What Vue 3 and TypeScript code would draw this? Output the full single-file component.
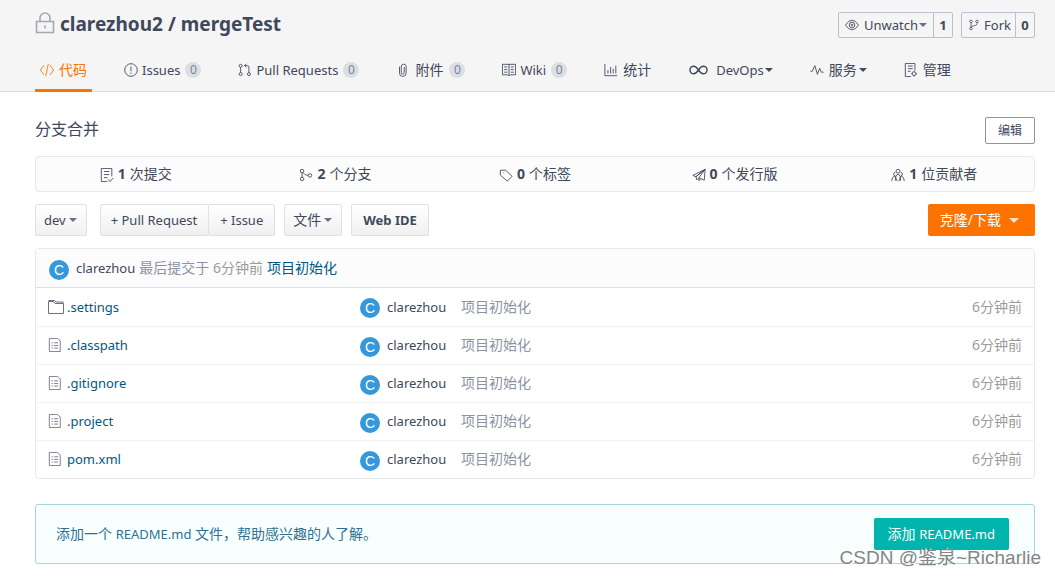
<script setup lang="ts">
interface Tab {
  label: string
  icon: string
  count?: number
  menu?: boolean
  active?: boolean
  cjk?: boolean
}

interface Stat {
  icon: string
  value: number
  label: string
}

interface Entry {
  name: string
  icon: string
}

const icons: Record<string, string> = {
  code: 'M4.5 2.5L.5 8l4 5.500M11.5 2.500L15.500 8l-4 5.500M9.5 1L6.5 15',
  issue: 'M8 .8a7.200 7.200 0 1 0 0 14.400a7.200 7.200 0 1 0 0-14.400M8 4v5.5M8 11v1.5',
  pull: 'M3 5v6M3 1.500a1.700 1.700 0 1 0 0 3.400a1.700 1.700 0 1 0 0-3.400M3 11a1.700 1.700 0 1 0 0 3.400a1.700 1.700 0 1 0 0-3.400M12.500 11a1.700 1.700 0 1 0 0 3.400a1.700 1.700 0 1 0 0-3.400M12.500 11V5q0-2-2-2H7.500M9.500 1L7.500 3l2 2',
  clip: 'M4 4v7.500a3.800 3.800 0 0 0 7.600 0V3.500a2.900 2.900 0 0 0-5.600 0V11a1.600 1.600 0 0 0 3.400 0V4.500',
  book: 'M.5 1.500h15v12H9.500L8 14.500l-1.500-1H.5zM8 1.500v12M2.500 4.500h3.500M2.500 7.500h3.500M2.500 10.500h3.500M10 4.500h3.500M10 7.500h3.500M10 10.500h3.500',
  chart: 'M1 1v13.500h14M4.500 12V8M7.500 12V4.500M10.500 12V6.500M13.500 12V3',
  pulse: 'M.5 9.500h2L5.500 3l3 10 2.500-7 2 4.500h2.500',
  manage: 'M8 15.500H1.500v-15h11v8M4.500 3.500h5.500M4.500 6.500h5.500M4.500 9.500h3M11.500 10a2.200 2.200 0 1 0 0 4.400a2.200 2.200 0 1 0 0-4.400M11.500 9v1M11.500 14.500v1M8.300 12.200h1M13.700 12.200h1',
  eye: 'M.5 8Q4 2.500 8 2.500t7.500 5.500Q12 13.500 8 13.500T.5 8zM8 4.800a3.200 3.200 0 1 0 0 6.400a3.200 3.200 0 1 0 0-6.400M8 7a1 1 0 1 0 0 2a1 1 0 1 0 0-2',
  fork: 'M4 5v6M4 1.500a1.700 1.700 0 1 0 0 3.400a1.700 1.700 0 1 0 0-3.400M4 11a1.700 1.700 0 1 0 0 3.400a1.700 1.700 0 1 0 0-3.400M12 1.500a1.700 1.700 0 1 0 0 3.400a1.700 1.700 0 1 0 0-3.400M12 5v1q0 3-4 3Q4 9 4 11',
  commit: 'M8.500 15.500H1.500v-15h12v9M4.500 4h6M4.500 7.500h6M4.500 11h4M9.500 13l2 2.500 3.500-4',
  branch: 'M3.500 5.500v5M3.500 1.500a2 2 0 1 0 0 4a2 2 0 1 0 0-4M3.500 10.500a2 2 0 1 0 0 4a2 2 0 1 0 0-4M12.500 6.500a2 2 0 1 0 0 4a2 2 0 1 0 0-4M4.500 5q2 3.500 6 3.500',
  tag: 'M1.500 2.500h6l7.500 7-5.500 5.500L1.500 8zM5 5.500h1',
  plane: 'M15 1.500L1 8.500l3.500 1.500zM15 1.500L4.500 10M15 1.500l-1 12.500-5.500-2.500M15 1.500L8 11v3.500l2-2.300M4.500 10l1 3.500 2.500-2.500',
  people: 'M8 1.500a2.200 2.200 0 1 0 0 4.400a2.200 2.200 0 1 0 0-4.400M5 5a2 2 0 1 0 0 4M11 5a2 2 0 1 1 0 4M5 14.500q0-6.500 3-7.500q3 1 3 7.500M.8 15q0-5 3.700-6l2.500 6M15.200 15q0-5-3.700-6L9 15',
  folder: 'M.5 14.500v-12h5l1.500 2h8.500v10zM.5 1.500h6l1.500 1.500h7v1.500',
  file: 'M1.500 .5h9.500l3 3v12H1.500zM4 5.500h1.500M7 5.500h4.500M4 8.500h1.500M7 8.500h4.500M4 11.500h1.500M7 11.500h4.500',
}

const tabs: Tab[] = [
  { label: '代码', icon: 'code', active: true, cjk: true },
  { label: 'Issues', icon: 'issue', count: 0 },
  { label: 'Pull Requests', icon: 'pull', count: 0 },
  { label: '附件', icon: 'clip', count: 0, cjk: true },
  { label: 'Wiki', icon: 'book', count: 0 },
  { label: '统计', icon: 'chart', cjk: true },
  { label: 'DevOps', icon: 'infinity', menu: true },
  { label: '服务', icon: 'pulse', menu: true, cjk: true },
  { label: '管理', icon: 'manage', cjk: true },
]

const stats: Stat[] = [
  { icon: 'commit', value: 1, label: '次提交' },
  { icon: 'branch', value: 2, label: '个分支' },
  { icon: 'tag', value: 0, label: '个标签' },
  { icon: 'plane', value: 0, label: '个发行版' },
  { icon: 'people', value: 1, label: '位贡献者' },
]

const entries: Entry[] = [
  { name: '.settings', icon: 'folder' },
  { name: '.classpath', icon: 'file' },
  { name: '.gitignore', icon: 'file' },
  { name: '.project', icon: 'file' },
  { name: 'pom.xml', icon: 'file' },
]
</script>

<template>
  <div class="page">
    <header class="top">
      <div class="title-row">
        <h1 class="title">
          <svg class="lock" viewBox="0 0 20 22" aria-hidden="true">
            <path d="M5 9.500V6a5 5 0 0 1 10 0v3.500M1.500 9.500h17v11h-17zM10 13.500v3" />
          </svg>
          <a href="#">clarezhou2</a><span>/</span><a href="#">mergeTest</a>
        </h1>
        <div class="social">
          <div class="pair">
            <button type="button" class="watch">
              <svg class="icon" viewBox="0 0 16 16" aria-hidden="true"><path :d="icons.eye" /></svg>
              Unwatch<i class="caret"></i>
            </button>
            <a href="#" class="num">1</a>
          </div>
          <div class="pair">
            <button type="button">
              <svg class="icon small" viewBox="0 0 16 16" aria-hidden="true"><path :d="icons.fork" /></svg>
              Fork
            </button>
            <a href="#" class="num">0</a>
          </div>
        </div>
      </div>
      <nav class="tabs">
        <a v-for="tab in tabs" :key="tab.label" href="#" class="tab" :class="{ active: tab.active, cjk: tab.cjk }">
          <svg v-if="tab.icon === 'infinity'" class="infinity" viewBox="0 0 20 10" aria-hidden="true">
            <path d="M10 5C8 2 6.500 1 5 1a4 4 0 0 0 0 8c1.500 0 3-1 5-4s3.500-4 5-4a4 4 0 0 1 0 8c-1.500 0-3-1-5-4z" />
          </svg>
          <svg v-else class="icon" viewBox="0 0 16 16" aria-hidden="true"><path :d="icons[tab.icon]" /></svg>
          <span>{{ tab.label }}</span>
          <span v-if="tab.count !== undefined" class="count">{{ tab.count }}</span>
          <i v-if="tab.menu" class="caret"></i>
        </a>
      </nav>
    </header>

    <main class="content">
      <div class="about">
        <p>分支合并</p>
        <button type="button" class="edit">编辑</button>
      </div>

      <div class="stats">
        <a v-for="stat in stats" :key="stat.label" href="#" class="stat">
          <svg class="icon" viewBox="0 0 16 16" aria-hidden="true"><path :d="icons[stat.icon]" /></svg>
          <b>{{ stat.value }}</b>
          <span>{{ stat.label }}</span>
        </a>
      </div>

      <div class="toolbar">
        <button type="button" class="btn branch">dev<i class="caret"></i></button>
        <div class="group">
          <button type="button" class="btn">+ Pull Request</button>
          <button type="button" class="btn">+ Issue</button>
        </div>
        <button type="button" class="btn cjk">文件<i class="caret"></i></button>
        <button type="button" class="btn strong">Web IDE</button>
        <button type="button" class="clone">克隆/下载<i class="caret"></i></button>
      </div>

      <section class="tree">
        <div class="latest">
          <span class="avatar">C</span>
          <a href="#" class="author">clarezhou</a>
          <span class="muted">最后提交于 <span class="time">6分钟前</span></span>
          <a href="#" class="message">项目初始化</a>
        </div>
        <table>
          <tbody>
            <tr v-for="entry in entries" :key="entry.name">
              <td class="name">
                <a href="#">
                  <svg class="icon" :class="entry.icon" viewBox="0 0 16 16" aria-hidden="true"><path :d="icons[entry.icon]" /></svg>
                  <span>{{ entry.name }}</span>
                </a>
              </td>
              <td class="by"><div><span class="avatar">C</span><a href="#">clarezhou</a></div></td>
              <td class="msg">项目初始化</td>
              <td class="age">6分钟前</td>
            </tr>
          </tbody>
        </table>
      </section>

      <section class="readme">
        <p>添加一个 <span>README.md</span> 文件，帮助感兴趣的人了解。</p>
        <button type="button">添加 <span>README.md</span></button>
      </section>
    </main>
    <div class="watermark">CSDN @鉴泉~Richarlie</div>
  </div>
</template>

<style>
body {
  margin: 0;
  background: #fff;
}
</style>

<style scoped>
.page {
  position: relative;
  color: #40485b;
  font: 13px/20px "Noto Sans", "Noto Sans CJK SC", sans-serif;
}

.page * {
  box-sizing: border-box;
}

a {
  color: inherit;
  text-decoration: none;
}

button {
  margin: 0;
  color: inherit;
  font: inherit;
  cursor: pointer;
}

p {
  margin: 0;
}

svg {
  flex: none;
  fill: none;
  stroke: currentColor;
}

.icon {
  width: 14px;
  height: 14px;
}

.icon.small {
  width: 12px;
  height: 12px;
}

.caret {
  display: inline-block;
  flex: none;
  border: 4px solid transparent;
  border-top-color: currentColor;
  border-bottom: 0;
}

.top {
  padding: 0 20px 0 35px;
  border-bottom: 1px solid #dcdcdc;
  background: #f5f5f5;
}

.title-row {
  display: flex;
  align-items: center;
  justify-content: space-between;
  height: 49px;
}

.title {
  display: flex;
  align-items: center;
  gap: 5px;
  margin: 0 0 2px;
  font-size: 19px;
  line-height: 28px;
}

.lock {
  width: 20px;
  height: 22px;
  margin-bottom: 2px;
  color: #a3a8b3;
  stroke-width: 1.6;
}

.social {
  display: flex;
  gap: 8px;
}

.pair {
  display: flex;
  height: 26px;
  border: 1px solid #bcc0cb;
  border-radius: 2px;
}

.pair button {
  display: flex;
  align-items: center;
  gap: 4px;
  padding: 0 4px 0 6px;
  border: 0;
  background: none;
}

.pair .watch {
  padding-right: 6px;
  gap: 5px;
}

.pair .caret {
  margin-left: -4px;
  color: #6b7182;
}

.num {
  min-width: 19px;
  border-left: 1px solid #bcc0cb;
  font-weight: bold;
  line-height: 24px;
  text-align: center;
}

.tabs {
  display: flex;
  gap: 27px;
}

.tab {
  display: flex;
  align-items: center;
  gap: 4px;
  height: 43px;
  margin-bottom: -1px;
  padding: 2px 5px 0;
  border-bottom: 3px solid transparent;
  white-space: nowrap;
}

.tab.cjk {
  gap: 5px;
}

.tab.active {
  border-color: #fe7300;
  color: #fe7300;
}

.tab .caret {
  margin-left: -3px;
}

.cjk {
  font-size: 14px;
}

.infinity {
  width: 19px;
  height: 10px;
  margin: 0 4px 0 1px;
  stroke-width: 1.5;
}

.count {
  width: 16px;
  height: 16px;
  margin-left: 1px;
  border-radius: 8px;
  background: #dcdee2;
  color: #7483a8;
  font-size: 12px;
  line-height: 16px;
  text-align: center;
}

.content {
  padding: 25px 20px 12px 35px;
}

.about {
  display: flex;
  align-items: flex-start;
  justify-content: space-between;
  margin-bottom: 12px;
  font-size: 16px;
  line-height: 24px;
}

.edit {
  height: 27px;
  padding: 0 12px;
  border: 1px solid #9095a1;
  border-radius: 2px;
  background: #fff;
  font-size: 12px;
}

.stats {
  display: grid;
  grid-template-columns: repeat(5, 1fr);
  height: 36px;
  border: 1px solid #e3e9ed;
  border-radius: 4px;
  background: #fcfcfc;
}

.stat {
  display: flex;
  align-items: center;
  justify-content: center;
  gap: 4px;
  font-size: 14px;
}

.stat .icon {
  margin-top: 2px;
}

.toolbar {
  display: flex;
  margin: 12px 0;
  gap: 9px;
}

.btn {
  display: flex;
  align-items: center;
  gap: 3px;
  height: 32px;
  padding: 0 9px 0 8px;
  border: 1px solid #dce3e8;
  border-radius: 2px;
  background: linear-gradient(#fff, #f0f0f0);
}

.btn .caret {
  color: #6b7182;
}

.branch {
  margin-right: 4px;
}

.group {
  display: flex;
}

.group .btn {
  padding: 0 11px 0 10px;
}

.group .btn + .btn {
  padding: 0 11px;
  margin-left: -1px;
}

.btn.strong {
  padding: 0 11px;
  font-weight: bold;
}

.clone {
  display: flex;
  align-items: center;
  gap: 8px;
  height: 32px;
  margin-left: auto;
  padding: 0 16px 0 12px;
  border: 0;
  border-radius: 2px;
  background: #fe7300;
  color: #fff;
  font-size: 14px;
}

.clone .caret {
  border-width: 5px 5px 0;
  opacity: 0.8;
}

.tree {
  border: 1px solid #e3e9ed;
  border-radius: 4px;
}

.latest {
  display: flex;
  align-items: center;
  gap: 4px;
  height: 39px;
  padding: 0 13px;
  border-bottom: 1px solid #dce3e8;
  background: #fcfcfc;
  font-size: 14px;
}

.avatar {
  flex: none;
  width: 20px;
  height: 20px;
  margin: 3px 3px 0 0;
  border-radius: 50%;
  background: #3498db;
  color: #fff;
  font: 14px/21px "Liberation Sans", sans-serif;
  text-align: center;
}

.author {
  font-size: 13px;
}

.muted {
  color: #8c92a4;
}

.time {
  color: #9b9b9b;
}

.message,
.name {
  color: #005980;
}

table {
  width: 100%;
  border-collapse: collapse;
  table-layout: fixed;
}

td {
  height: 38px;
  padding: 0;
  border-bottom: 1px solid #f0f3f6;
}

tr:last-child td {
  border-bottom: 0;
}

.name {
  width: 324px;
  padding-left: 12px;
}

.name a,
.by div {
  display: flex;
  align-items: center;
  gap: 4px;
}

.name a {
  gap: 5px;
}

.name .icon {
  color: #6b7182;
}

.name .folder {
  width: 16px;
  height: 16px;
  margin-right: -2px;
}

.by {
  width: 101px;
}

.msg {
  color: #8c92a4;
  font-size: 14px;
}

.age {
  width: 100px;
  padding-right: 12px;
  color: #9b9b9b;
  font-size: 14px;
  text-align: right;
}

.readme {
  display: flex;
  align-items: center;
  justify-content: space-between;
  height: 60px;
  margin-top: 25px;
  padding: 0 25px 0 20px;
  border: 1px solid #a5d5dc;
  border-radius: 3px;
  background: #f7ffff;
  font-size: 14px;
}

.readme span {
  font-size: 13px;
}

.readme p {
  color: #31708f;
}

.readme button {
  height: 32px;
  padding: 0 14px;
  border: 0;
  border-radius: 2px;
  background: #00b5ad;
  color: #fff;
}

.watermark {
  position: absolute;
  right: 14px;
  bottom: 6px;
  color: #858585;
  font: 19px/24px "Liberation Sans", "Noto Sans CJK SC", sans-serif;
  text-shadow: 1px 1px 0 #fff;
  white-space: nowrap;
}
</style>
